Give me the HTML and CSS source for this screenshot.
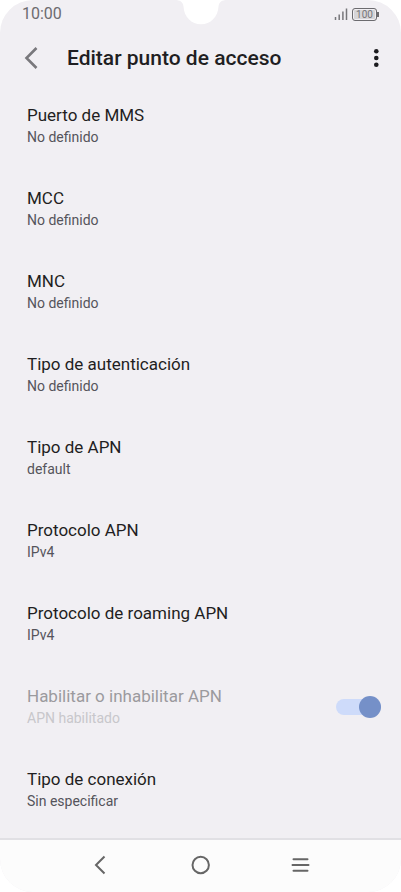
FILE: index.html
```html
<!DOCTYPE html>
<html lang="es">
<head>
<meta charset="utf-8">
<meta name="viewport" content="width=device-width, initial-scale=1">
<title>Editar punto de acceso</title>
<link rel="stylesheet" href="styles.css">
</head>
<body>
<div class="screen">
  <div class="status">
    <span class="clock">10:00</span>
    <svg class="notch" width="52" height="25" viewBox="0 0 52 25" aria-hidden="true"><path d="M0 0C5 0 8 2 8.500 6.500C9 17 16.500 24.300 26 24.300S43 17 43.500 6.500C44 2 47 0 52 0Z" fill="#fff"/></svg>
    <div class="indicators">
      <svg width="14" height="12" viewBox="0 0 14 12" aria-hidden="true"><path d="M1.500 9v3M5.200 6.500V12M8.900 3.500V12M12.500 0.500V12" stroke="#77767a" stroke-width="1.500"/></svg>
      <div class="battery">100</div>
    </div>
  </div>
  <header class="bar">
    <button class="icon-button" aria-label="Atrás"><svg width="16" height="24" viewBox="0 0 16 24"><path d="M13.500 2L3.500 12L13.500 22" fill="none" stroke="#79787c" stroke-width="2.600"/></svg></button>
    <h1>Editar punto de acceso</h1>
    <button class="icon-button" aria-label="Más opciones"><svg width="6" height="20" viewBox="0 0 6 20"><g fill="#1c1b1f"><circle cx="3.300" cy="3.200" r="2.300"/><circle cx="3.300" cy="10" r="2.300"/><circle cx="3.300" cy="16.800" r="2.300"/></g></svg></button>
  </header>
  <main class="list">
    <button class="row"><span class="title">Puerto de MMS</span><span class="value">No definido</span></button>
    <button class="row"><span class="title">MCC</span><span class="value">No definido</span></button>
    <button class="row"><span class="title">MNC</span><span class="value">No definido</span></button>
    <button class="row"><span class="title">Tipo de autenticación</span><span class="value">No definido</span></button>
    <button class="row"><span class="title">Tipo de APN</span><span class="value">default</span></button>
    <button class="row"><span class="title">Protocolo APN</span><span class="value">IPv4</span></button>
    <button class="row"><span class="title">Protocolo de roaming APN</span><span class="value">IPv4</span></button>
    <label class="row row-switch" for="apn-enabled">
      <span class="text"><span class="title">Habilitar o inhabilitar APN</span><span class="value">APN habilitado</span></span>
      <input class="switch" id="apn-enabled" type="checkbox" role="switch" checked disabled>
    </label>
    <button class="row"><span class="title">Tipo de conexión</span><span class="value">Sin especificar</span></button>
  </main>
  <nav class="nav">
    <button class="icon-button" aria-label="Atrás"><svg width="20" height="20" viewBox="0 0 20 20"><path d="M14.500 1.500L6 10L14.500 18.500" fill="none" stroke="#666" stroke-width="2"/></svg></button>
    <button class="icon-button" aria-label="Inicio"><svg width="20" height="20" viewBox="0 0 20 20"><circle cx="9.700" cy="10" r="8.200" fill="none" stroke="#666" stroke-width="2"/></svg></button>
    <button class="icon-button" aria-label="Recientes"><svg width="20" height="20" viewBox="0 0 20 20"><path d="M2.500 4.300H16.500M1.500 10H17.500M2.500 15.700H16.500" stroke="#666" stroke-width="2" stroke-linecap="round"/></svg></button>
  </nav>
</div>
</body>
</html>
```
FILE: styles.css
```css
* {
  box-sizing: border-box;
}

body {
  margin: 0;
  background: #fff;
  color: #1f1e22;
  font-family: Roboto, "Liberation Sans", sans-serif;
}

button {
  border: 0;
  padding: 0;
  background: none;
  color: inherit;
  font: inherit;
}

svg {
  display: block;
}

.screen {
  display: flex;
  flex-direction: column;
  min-height: 100vh;
  overflow: hidden;
  border-radius: 33px;
  background: #f1eff3;
}

.status {
  display: grid;
  grid-template-columns: 1fr auto 1fr;
  height: 28px;
  padding: 0 22px;
}

.clock {
  color: #6c6b6f;
  font-size: 16px;
  line-height: 28px;
}

.indicators {
  display: flex;
  align-items: center;
  justify-content: flex-end;
  gap: 4px;
}

.battery {
  position: relative;
  width: 25px;
  height: 13px;
  margin-right: 2px;
  border: 1px solid #6c6b6f;
  border-radius: 3px;
  background: #d6d5d8;
  box-shadow: inset 0 0 0 1px #f1eff3;
  color: #77767a;
  font-size: 10px;
  line-height: 11px;
  text-align: center;
}

.battery::after {
  content: "";
  position: absolute;
  top: 3px;
  right: -3px;
  width: 2px;
  height: 5px;
  background: #6c6b6f;
}

.bar {
  display: flex;
  align-items: center;
  height: 56px;
  padding: 4px 12px 0 11px;
}

.icon-button {
  display: flex;
  align-items: center;
  justify-content: center;
  width: 40px;
  height: 40px;
}

.bar .icon-button {
  width: 26px;
}

.bar .icon-button:first-child {
  width: 40px;
}

h1 {
  flex: 1;
  margin: 0;
  padding-left: 16px;
  font-size: 21px;
  font-weight: 500;
  line-height: 28px;
}

.list {
  flex: 1;
}

.row {
  display: flex;
  flex-direction: column;
  width: 100%;
  padding: 20px 20px 19px 27px;
  text-align: left;
}

.row-switch {
  flex-direction: row;
  align-items: center;
}

.text {
  display: flex;
  flex: 1;
  flex-direction: column;
}

.title {
  font-size: 17px;
  line-height: 22px;
}

.value {
  color: #55545b;
  font-size: 14px;
  line-height: 22px;
}

.row-switch .title {
  color: #9b9a9e;
}

.row-switch .value {
  color: #c8c7cb;
}

.switch {
  position: relative;
  width: 45px;
  height: 16px;
  margin: 0;
  border-radius: 8px;
  background: #cedbfa;
  appearance: none;
}

.switch::before {
  content: "";
  position: absolute;
  top: -3px;
  right: 0;
  width: 22px;
  height: 22px;
  border-radius: 50%;
  background: #7590c8;
}

.nav {
  display: flex;
  align-items: center;
  justify-content: space-between;
  height: 54px;
  padding: 0 20% 2px;
  border-top: 2px solid #e1e0e4;
  background: #fcfcfc;
}
```
